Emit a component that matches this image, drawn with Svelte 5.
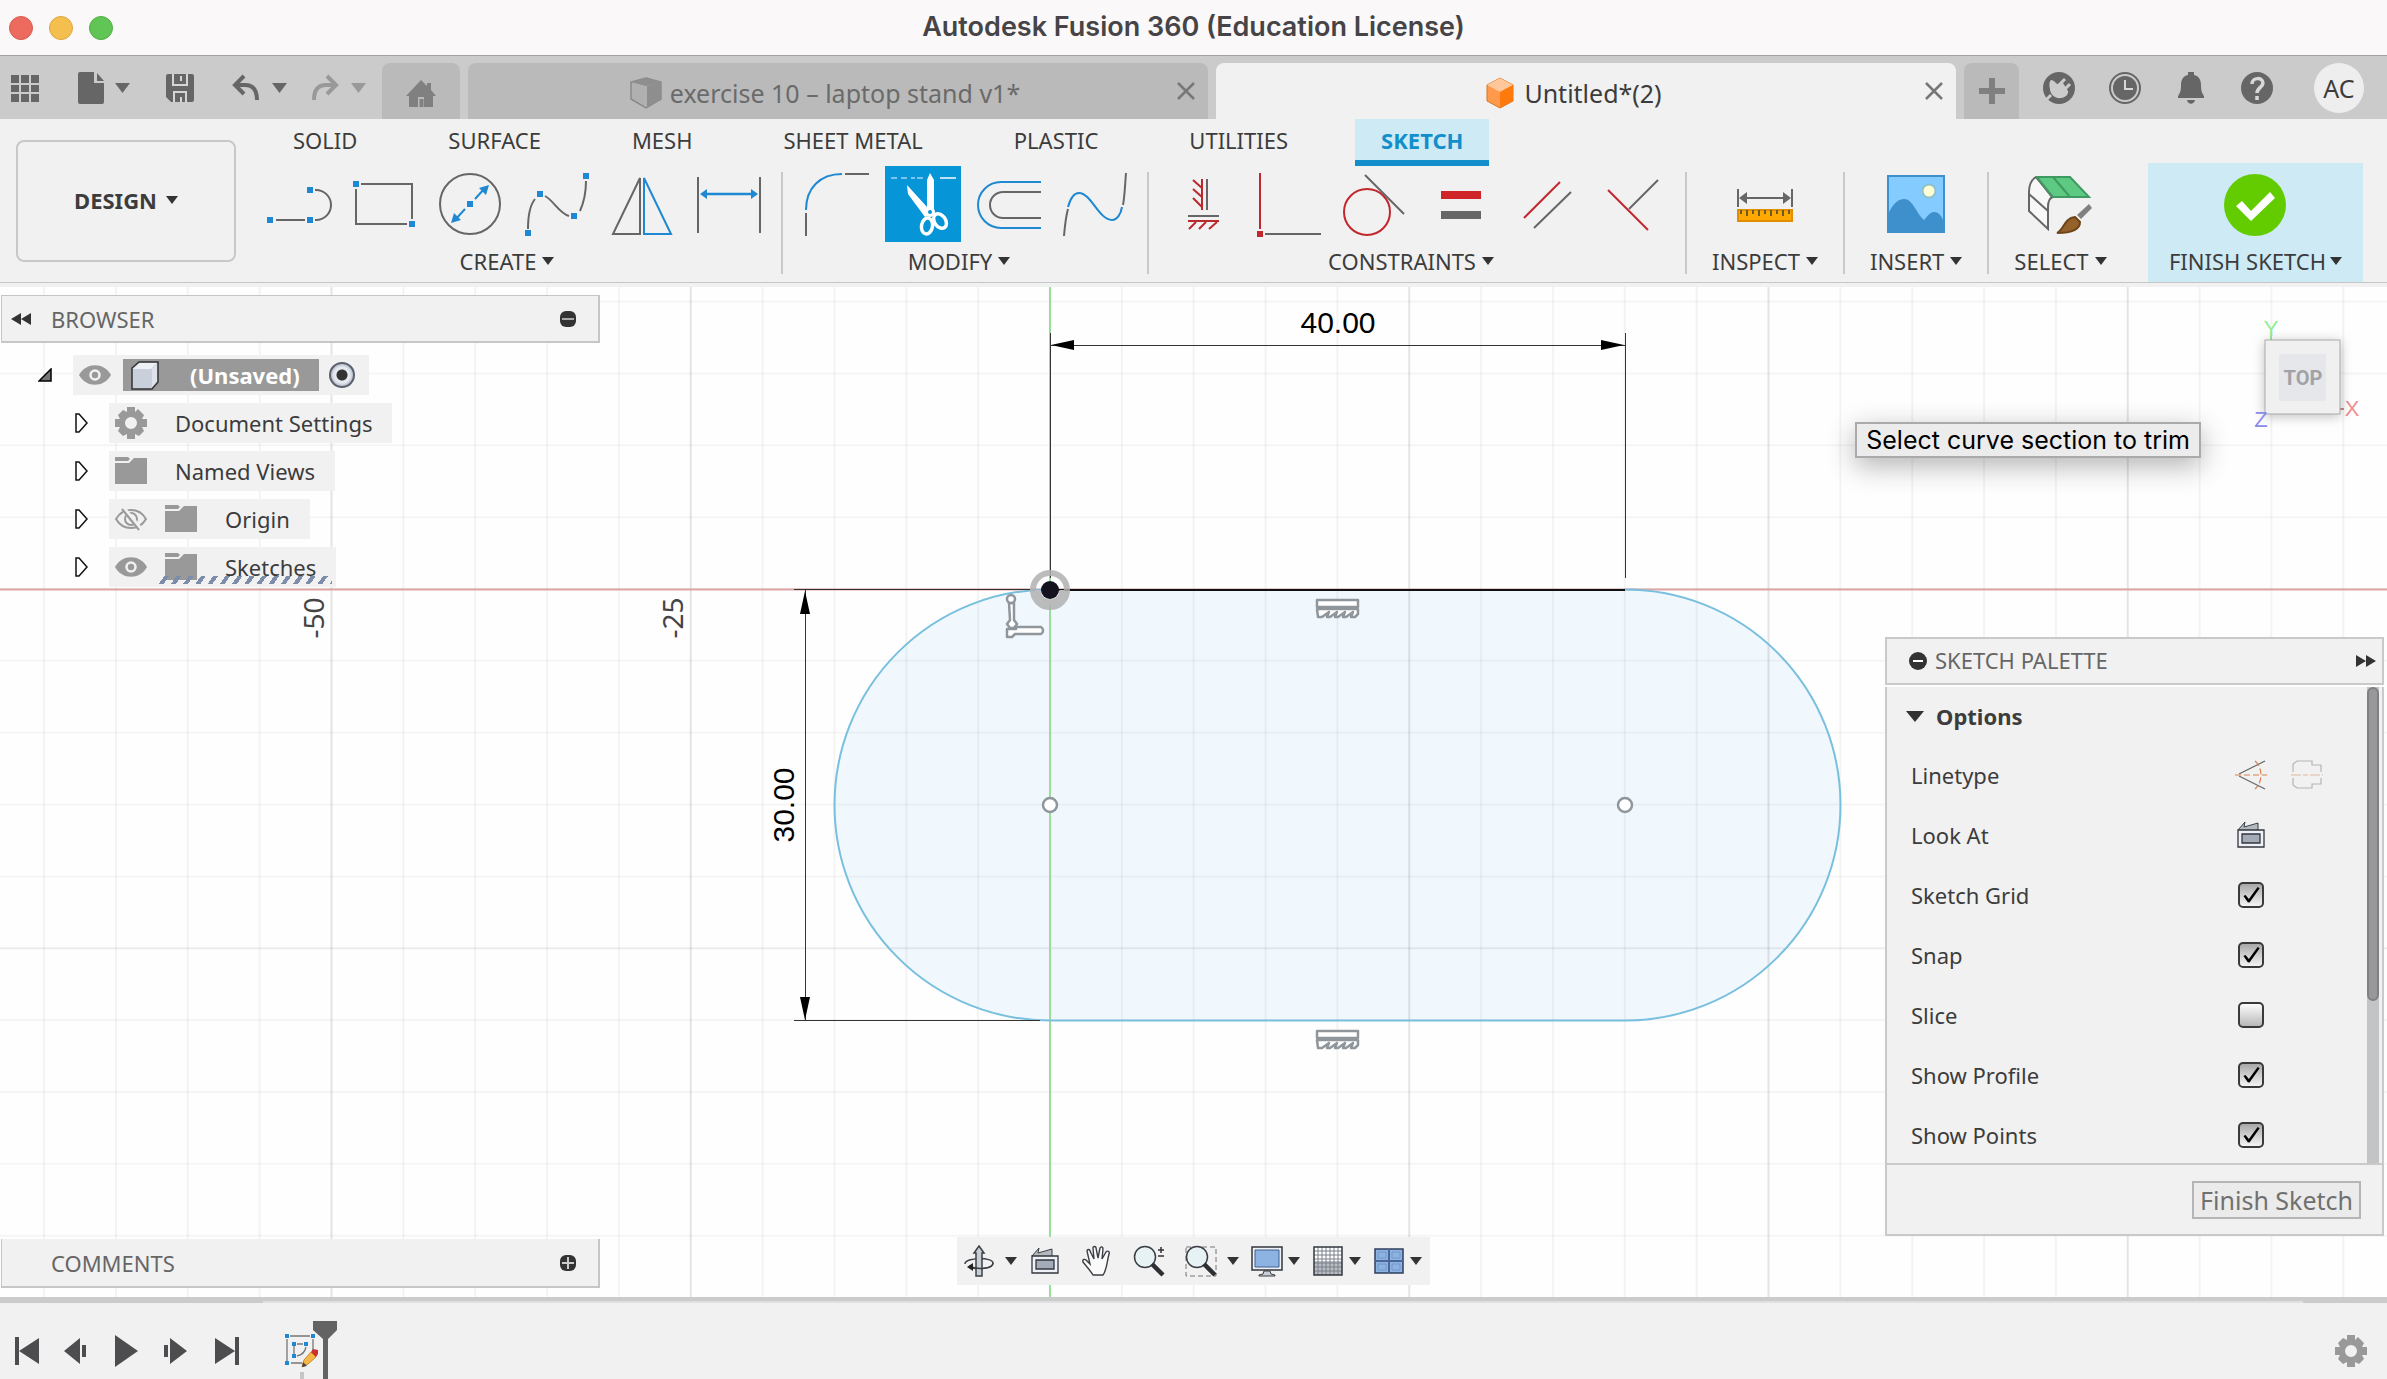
<script>
  const ribbonTabs = ['SOLID', 'SURFACE', 'MESH', 'SHEET METAL', 'PLASTIC', 'UTILITIES', 'SKETCH'];
  let activeTab = $state('SKETCH');

  const groups = [
    { label: 'CREATE', icons: ['line', 'rectangle', 'circle', 'spline', 'mirror', 'dimension'] },
    { label: 'MODIFY', icons: ['fillet', 'trim', 'offset', 'curvature'] },
    { label: 'CONSTRAINTS', icons: ['horizontal', 'coincident', 'tangent', 'equal', 'parallel', 'perpendicular'] },
    { label: 'INSPECT', icons: ['measure'], single: true },
    { label: 'INSERT', icons: ['image'], single: true },
    { label: 'SELECT', icons: ['select'], single: true },
    { label: 'FINISH SKETCH', icons: ['finish'], single: true, finish: true }
  ];

  const tree = [
    { name: 'Document Settings', icons: ['gear'] },
    { name: 'Named Views', icons: ['folder'] },
    { name: 'Origin', icons: ['hidden', 'folder'] },
    { name: 'Sketches', icons: ['eye', 'folder'], pending: true }
  ];

  let options = $state([
    { id: 'grid', name: 'Sketch Grid', on: true },
    { id: 'snap', name: 'Snap', on: true },
    { id: 'slice', name: 'Slice', on: false },
    { id: 'profile', name: 'Show Profile', on: true },
    { id: 'points', name: 'Show Points', on: true }
  ]);

  const navItems = [
    { icon: 'orbit', menu: 'wide' },
    { icon: 'lookat' },
    { icon: 'pan' },
    { icon: 'zoom' },
    { icon: 'zoomwindow', menu: 'wide' },
    { icon: 'display', menu: 'near' },
    { icon: 'gridsnap', menu: 'near' },
    { icon: 'viewports', menu: 'near' }
  ];

  // The sketch plane: 5 mm per minor grid line, 25 mm per major one.
  const origin = { x: 1050, y: 589 };
  const step = 71.85;
  const columns = Array.from({ length: 33 }, (_, i) => i - 14);
  const lines = Array.from({ length: 15 }, (_, i) => i - 4);
</script>

{#snippet caret()}
  <svg class="caret" viewBox="0 0 14 10" preserveAspectRatio="none" aria-hidden="true"><path d="M0 0h14L7 10z" fill="currentColor" /></svg>
{/snippet}

{#snippet square(x, y)}
  <rect x={x - 3} y={y - 3} width="6" height="6" fill="#1e88d2" stroke="none" />
{/snippet}

{#snippet cutter(name)}
  <svg class="tool" viewBox="0 0 64 64" fill="none" stroke="#666" stroke-width="2" aria-hidden="true">
    {#if name === 'line'}
      <path d="M9 48H38M48 18h1a15 15 0 0 1 0 30h-1" />
      {@render square(3, 48)}{@render square(43, 48)}{@render square(43, 18)}
    {:else if name === 'rectangle'}
      <path d="M8 12H59V47M54 52H3V17" />
      {@render square(3, 12)}{@render square(59, 52)}
    {:else if name === 'circle'}
      <circle cx="31" cy="32" r="30" />
      <path d="M36 27l10-11M26 37L16 48" stroke="#1e88d2" />
      <path d="M50 13l-3 10-7-7zM12 51l3-10 7 7z" fill="#1e88d2" stroke="none" />
      {@render square(31, 32)}
    {:else if name === 'spline'}
      <path d="M3 57C3 42 6 32 10 27M20 24C29 29 34 41 44 44M55 39C59 30 61 20 61 9" />
      {@render square(3, 61)}{@render square(15, 22)}{@render square(49, 44)}{@render square(61, 4)}
    {:else if name === 'mirror'}
      <path d="M2 62H29V6z" />
      <path d="M33 6V62H60z" stroke="#1e88d2" />
    {:else if name === 'dimension'}
      <path d="M1 5V61M63 5V61" />
      <path d="M6 22H58" stroke="#1e88d2" stroke-width="2.5" />
      <path d="M3 22l7-5v10zM61 22l-7-5v10z" fill="#1e88d2" stroke="none" />
    {:else if name === 'fillet'}
      <path d="M1 38C1 16 15 2 37 2" stroke="#1e88d2" />
      <path d="M40 2H64M1 41V64" />
    {:else if name === 'trim'}
      <path d="M0 6H24" stroke="#7cc4ee" stroke-dasharray="6 4" />
      <path d="M26 6H36" stroke="#7cc4ee" stroke-dasharray="6 4" /><path d="M49 6H65" stroke="#bfe2f6" />
      <path d="M39 1l4 7v32h-7V8zM16 13l20 22 3 8-5 2-17-23z" fill="#fff" stroke="none" />
      <ellipse cx="36" cy="54" rx="5.500" ry="8" stroke="#fff" stroke-width="3.500" transform="rotate(10 36 54)" />
      <ellipse cx="49" cy="49" rx="5.500" ry="8" stroke="#fff" stroke-width="3.500" transform="rotate(-35 49 49)" />
      <circle cx="39" cy="40" r="5" fill="#fff" stroke="none" /><circle cx="39" cy="40" r="2" fill="#0696d7" stroke="none" />
    {:else if name === 'offset'}
      <path d="M64 10H24a23 23 0 0 0 0 46H64" stroke="#1e88d2" />
      <path d="M64 20H26a13 13 0 0 0 0 26H64" />
    {:else if name === 'curvature'}
      <path d="M1 64C2 52 3 44 5 37M60 33C62 22 62 12 63 1" />
      <path d="M5 35C8 24 12 21 16 21C28 21 36 48 49 48C54 48 58 42 59 35" stroke="#1e88d2" />
    {:else if name === 'horizontal'}
      <path d="M36 7V38M17 44H48" />
      <path d="M31 7V38M22 8l9 8M22 17l9 8M22 26l9 9M17 49H48M25 50l-7 7M35 50l-7 7M46 50l-8 7" stroke="#b92a2e" />
    {:else if name === 'coincident'}
      <path d="M3 1V57" stroke="#c1272d" /><path d="M8 62H64" />
      <rect x="0" y="59" width="6" height="6" fill="#c1272d" stroke="none" />
    {:else if name === 'tangent'}
      <circle cx="24" cy="40" r="23" stroke="#c1272d" /><path d="M22 3L61 42" />
    {:else if name === 'equal'}
      <rect x="12" y="19" width="40" height="8" fill="#cf2529" stroke="none" />
      <rect x="12" y="39" width="40" height="8" fill="#666" stroke="none" />
    {:else if name === 'parallel'}
      <path d="M9 46L45 10" stroke="#c1272d" /><path d="M19 56L56 20" />
    {:else if name === 'perpendicular'}
      <path d="M57 8L28 37" /><path d="M7 18L47 58" stroke="#c1272d" />
    {:else if name === 'measure'}
      <path d="M5 17V35M59 17V35M10 26H54" />
      <path d="M6 26l8-6v12zM58 26l-8-6v12z" fill="#666" stroke="none" />
      <rect x="5" y="38" width="54" height="11" fill="#ffa800" stroke="#e08e00" />
      <path d="M8 38v4M14 38v6M20 38v4M26 38v6M32 38v4M38 38v6M44 38v4M50 38v6M56 38v4" stroke="#6b5a2a" />
    {:else if name === 'image'}
      <rect x="4" y="4" width="56" height="56" fill="#84cbff" stroke="none" />
      <path d="M4 42C10 30 15 27 20 27C29 27 32 41 40 48C45 42 47 40 50 40C55 40 58 44 60 51V60H4z" fill="#3e90cd" stroke="none" />
      <circle cx="45" cy="19" r="6.500" fill="#ffffd6" stroke="#8fc0c9" />
      <rect x="4" y="4" width="56" height="56" stroke="#3e90cd" />
    {:else if name === 'select'}
      <path d="M8 5C3 8 1 13 1 20V39L20 57V35C20 29 21 26 25 25" fill="#f7f7f7" />
      <path d="M1 22L20 39M8 5C14 12 18 18 24 25" />
      <path d="M9 5H42L61 25H25z" fill="#5dc983" stroke="#3f9a62" /><path d="M25 5L42 25" stroke="#3f9a62" />
      <path d="M61 32l3 4-11 11-4-4z" fill="#808080" stroke="none" />
      <path d="M47 45l5 5C52 58 42 61 29 61C36 58 36 46 47 45z" fill="#95622c" stroke="#6d4519" />
    {:else if name === 'finish'}
      <circle cx="32" cy="33" r="31" fill="#63cc00" stroke="none" />
      <path d="M19 29l9 10 19-19 5 6-24 23-15-15z" fill="#fff" stroke="none" />
    {/if}
  </svg>
{/snippet}

{#snippet glyph(name)}
  <svg class="glyph" viewBox="0 0 32 32" fill="none" aria-hidden="true">
    {#if name === 'apps'}
      <path d="M2 3h8v8H2zM12 3h8v8h-8zM22 3h8v8h-8zM2 13h8v7H2zM12 13h8v7h-8zM22 13h8v7h-8zM2 22h8v8H2zM12 22h8v8h-8zM22 22h8v8h-8z" fill="#666" />
    {:else if name === 'file'}
      <path d="M5 0H19V11H29V30a2 2 0 0 1-2 2H5a2 2 0 0 1-2-2V2a2 2 0 0 1 2-2zM22 1l7 8H22z" fill="#666" />
    {:else if name === 'save'}
      <path d="M4 2H28a2 2 0 0 1 2 2V28a2 2 0 0 1-2 2H7l-5-5V4a2 2 0 0 1 2-2z" fill="#666" />
      <path d="M9 2v11H23V2M10 30V20H22V30M17 25v5M17 4v5" stroke="#d5d5d5" stroke-width="2" />
    {:else if name === 'undo'}
      <path d="M14 4L5 13l9 9M6 13H15C23 13 27 18 27 28" stroke="#666" stroke-width="4" />
    {:else if name === 'redo'}
      <path d="M18 4L27 13L18 22M26 13H17C9 13 5 18 5 28" stroke="#999" stroke-width="4" />
    {:else if name === 'home'}
      <path d="M16 2l6 6V5h4v7l5 6H28V29H19V19H13V29H4V18H1z" fill="#808080" /><path d="M14.500 21h4v8h-4z" fill="#808080" />
    {:else if name === 'part'}
      <path d="M16 1L31 5V22L16 31L1 22V5z" fill="#b0b0b0" stroke="#8a8a8a" stroke-width="1.500" />
      <path d="M17 9L31 5V22L17 31zM1 5L16 1 31 5 16 9z" fill="#8e8e8e" />
    {:else if name === 'assembly'}
      <path d="M16 1L29 8V24L16 31L3 24V8z" fill="#ff9a4d" stroke="#d9741f" />
      <path d="M16 1L29 8L16 15L3 8z" fill="#ffc89b" /><path d="M16 15L29 8V24L16 31z" fill="#ff7a0d" />
    {:else if name === 'plug'}
      <circle cx="16" cy="16" r="16" fill="#666" />
      <path d="M8 8C10 8 12 10 14 12L20 11L25 19C26 22 22 26 18 26C12 27 7 22 7 17C6 13 6 10 8 8z" fill="#ccc" />
      <path d="M16 13l6-6M21 18l6-6M8 23l-6 6" stroke="#ccc" stroke-width="3" />
    {:else if name === 'clock'}
      <circle cx="16" cy="16" r="15" stroke="#666" stroke-width="2" /><circle cx="16" cy="16" r="12" fill="#666" />
      <path d="M16 8v9h8" stroke="#d8d8d8" stroke-width="2" />
    {:else if name === 'bell'}
      <path d="M13 0h6v3c5 1 7 5 7 10 0 6 1 8 3 11v2H3v-2c2-3 3-5 3-11 0-5 2-9 7-10zM12 28h8c-1 5-7 5-8 0z" fill="#666" />
    {:else if name === 'help'}
      <circle cx="16" cy="16" r="16" fill="#666" />
      <path d="M11 12C11 5 22 5 22 11C22 15 16 16 16 21M16 24v4" stroke="#d8d8d8" stroke-width="3.500" />
    {:else if name === 'gear'}
      <path d="M12 0h8v5l3-3 6 6-2 4h5v8h-5l2 4-5 5-4-2v5h-8v-5l-4 2-5-5 2-4H0v-8h5L3 8l5-5 4 2zM16 10a6 6 0 1 0 0 12a6 6 0 0 0 0-12z" fill="#999" fill-rule="evenodd" />
    {:else if name === 'folder'}
      <path d="M0 8H14l5-5H32V29H0zM0 2H13l2 2-2 2H0z" fill="#999" />
    {:else if name === 'eye'}
      <path d="M0 16C7 3 25 3 32 16C25 29 7 29 0 16z" fill="#999" />
      <circle cx="16" cy="16" r="4.500" stroke="#f1f1f1" stroke-width="2.500" />
    {:else if name === 'hidden'}
      <path d="M1 16C8 4 24 4 31 16C24 28 8 28 1 16z" stroke="#999" stroke-width="2" />
      <circle cx="16" cy="16" r="6" stroke="#999" stroke-width="2" /><circle cx="16" cy="16" r="2" fill="#999" />
      <path d="M8 5l18 22" stroke="#f1f1f1" stroke-width="5" /><path d="M7 6l17 21" stroke="#999" stroke-width="2" />
    {:else if name === 'body'}
      <path d="M3 9L10 3H29V23L23 30H3z" fill="#c9cfdb" stroke="#333" stroke-width="1.500" />
      <path d="M4 10L11 4H28L22 10z" fill="#eef1f6" /><path d="M23 10L28 5V22L23 28z" fill="#dde2ec" />
    {:else if name === 'orbit'}
      <path d="M2 19C2 12 30 12 30 18C30 24 14 25 6 22" stroke="#3b3f45" stroke-width="1.500" />
      <path d="M16 1l5 7h-2V31h-6V8h-2z" fill="#c9cdd4" stroke="#3b3f45" stroke-width="1.500" />
      <path d="M6 21C14 25 30 24 30 18" stroke="#3b3f45" stroke-width="1.500" />
      <path d="M4 22l6-4v8z" fill="#222" />
    {:else if name === 'lookat'}
      <path d="M3 11L10 3L9 8L23 4V11" fill="#b3b8bf" stroke="#3b3f45" />
      <path d="M3 11H29V28H3z" fill="#eef1f8" stroke="#33373d" stroke-width="1.300" />
      <path d="M7 15H25V24H7z" fill="#a3abb8" stroke="#33373d" stroke-width="1.300" />
    {:else if name === 'pan'}
      <path d="M12 30C9 25 5 21 2 17C1 14 4 14 5 15L9 19L6 6C6 4 9 4 9 6L13 14L12 3C12 1 15 1 15 3L17 13L19 3C20 1 22 2 22 4L21 14L25 7C27 5 29 7 28 9C26 16 26 25 22 30z" fill="#fafafa" stroke="#3b3f45" stroke-width="1.400" />
    {:else if name === 'zoom'}
      <circle cx="12" cy="12" r="10.500" fill="#e6f2f4" stroke="#3b3f45" stroke-width="1.500" />
      <path d="M19 19L30 30" stroke="#2d2f33" stroke-width="4.500" /><path d="M25 5h6M28 2v6M25 11h6" stroke="#333" stroke-width="1.500" />
    {:else if name === 'zoomwindow'}
      <path d="M1 2H31V31H1z" stroke="#777" stroke-dasharray="5 3" />
      <circle cx="12" cy="12" r="10.500" fill="#e6f2f4" stroke="#3b3f45" stroke-width="1.500" /><path d="M19 19L30 30" stroke="#2d2f33" stroke-width="4.500" />
    {:else if name === 'display'}
      <path d="M1 2H31V25H1z" fill="#eef1f6" stroke="#33373d" stroke-width="1.500" /><path d="M4 5H28V22H4z" fill="#8db3e2" stroke="#3f5f8f" />
      <path d="M13 26h6l1 3 4 1v1H8v-1l4-1z" fill="#c9cdd4" stroke="#3b3f45" />
    {:else if name === 'gridsnap'}
      <path d="M2 2H30V30H2z" fill="#fff" /><path d="M2 16H30V30H2z" fill="#b9bdc5" />
      <path d="M6 2V30M10 2V30M14 2V30M18 2V30M22 2V30M26 2V30M2 6H30M2 10H30M2 14H30M2 18H30M2 22H30M2 26H30" stroke="#7b8088" />
      <path d="M2 2H30V30H2z" stroke="#33373d" stroke-width="1.500" />
    {:else if name === 'viewports'}
      <path d="M2 4H30V28H2z" fill="#8db3e2" stroke="#2c3e5e" stroke-width="1.500" />
      <path d="M16 4V28M2 16H30" stroke="#4a6796" stroke-width="2" /><path d="M5 7h8v6H5zM19 7h8v6h-8zM5 19h8v6H5zM19 19h8v6h-8z" stroke="#7398cb" />
    {:else if name === 'construction'}
      <path d="M30 2L4 15M4 17L30 30" stroke="#666" stroke-width="1.200" />
      <path d="M0 16H32M20 2C28 9 28 23 20 30" stroke="#d98250" stroke-width="1.200" stroke-dasharray="6 3" />
    {:else if name === 'centerline'}
      <path d="M2 13V5l4-3H21V6h9v7M2 19v7l4 3H21v-4h9v-6" stroke="#b5b5b5" stroke-width="1.200" />
      <path d="M0 16H32" stroke="#e0b79f" stroke-width="1.200" stroke-dasharray="10 2 5 2" />
    {:else if name === 'start'}
      <path d="M4 2h4v28H4zM28 3V29L8 16z" fill="#4d4d4f" />
    {:else if name === 'back'}
      <path d="M19 3V29L3 16zM21 10h4v12h-4z" fill="#4d4d4f" />
    {:else if name === 'play'}
      <path d="M4 0L27 16L4 32z" fill="#4d4d4f" />
    {:else if name === 'forward'}
      <path d="M9 3V29L26 16zM3 10h4v12H3z" fill="#4d4d4f" />
    {:else if name === 'end'}
      <path d="M24 2h4v28h-4zM4 3V29L24 16z" fill="#4d4d4f" />
    {/if}
  </svg>
{/snippet}

{#snippet flatMark(x, y)}
  <g transform="translate({x} {y})" fill="#fff" stroke="#8f969c" stroke-width="2.500">
    <path d="M2 1H43V8H2zM2 10H43V15L40 18H36L38 13L31 18H28L30 13L23 18H20L22 13L15 18H12L14 13L7 18H3z" stroke-linejoin="round" />
  </g>
{/snippet}

<div class="app">
  <header class="titlebar">
    <div class="lights">
      <button class="light close" aria-label="Close"></button>
      <button class="light minimise" aria-label="Minimise"></button>
      <button class="light full" aria-label="Full screen"></button>
    </div>
    <h1>Autodesk Fusion 360 (Education License)</h1>
  </header>

  <div class="strip">
    <div class="quick">
      <button aria-label="Data panel">{@render glyph('apps')}</button>
      <button class="menu" aria-label="File">{@render glyph('file')}{@render caret()}</button>
      <button aria-label="Save">{@render glyph('save')}</button>
      <div class="history">
        <button class="menu" aria-label="Undo">{@render glyph('undo')}{@render caret()}</button>
        <button class="menu faint" aria-label="Redo">{@render glyph('redo')}{@render caret()}</button>
      </div>
    </div>
    <nav class="documents">
      <button class="doc home" aria-label="Home">{@render glyph('home')}</button>
      <div class="doc">
        <button class="doc-name">{@render glyph('part')}exercise 10 – laptop stand v1*</button>
        <button class="doc-close" aria-label="Close exercise 10"><svg viewBox="0 0 18 18"><path d="M1 1L17 17M17 1L1 17" stroke="#777" stroke-width="2.500" /></svg></button>
      </div>
      <div class="doc current">
        <button class="doc-name">{@render glyph('assembly')}Untitled*(2)</button>
        <button class="doc-close" aria-label="Close Untitled"><svg viewBox="0 0 18 18"><path d="M1 1L17 17M17 1L1 17" stroke="#777" stroke-width="2.500" /></svg></button>
      </div>
      <button class="doc add" aria-label="New design"><svg viewBox="0 0 26 26"><path d="M13 0V26M0 13H26" stroke="#808080" stroke-width="6" /></svg></button>
    </nav>
    <div class="account">
      <button aria-label="Extensions">{@render glyph('plug')}</button>
      <button aria-label="Job status">{@render glyph('clock')}</button>
      <button aria-label="Notifications">{@render glyph('bell')}</button>
      <button aria-label="Help">{@render glyph('help')}</button>
      <button class="avatar">AC</button>
    </div>
  </div>

  <div class="ribbon">
    <button class="workspace">DESIGN {@render caret()}</button>
    <div class="ribbon-main">
      <nav class="tabs">
        {#each ribbonTabs as tab}
          <button class="tab" class:active={tab === activeTab} onclick={() => (activeTab = tab)}>{tab}</button>
        {/each}
      </nav>
      <div class="groups">
        {#each groups as group}
          <div class="group" class:single={group.single} class:finish={group.finish}>
            <div class="tools">
              {#each group.icons as icon}
                <button class="tool-button" class:pressed={icon === 'trim'} aria-label={icon}>{@render cutter(icon)}</button>
              {/each}
            </div>
            <button class="group-label">{group.label}{@render caret()}</button>
          </div>
        {/each}
      </div>
    </div>
  </div>

  <main class="workspace-area">
    <svg class="plane" viewBox="0 287 2387 1010" preserveAspectRatio="xMidYMid slice" aria-label="Sketch plane">
      <rect x="0" y="287" width="2387" height="1010" fill="#fefefe" />
      <path d="M1050 589.500H1625A215.500 215.500 0 0 1 1625 1020.500H1050A215.500 215.500 0 0 1 1050 589.500z" fill="#f0f8fe" />
      {#each columns as c}
        <line x1={origin.x + c * step} x2={origin.x + c * step} y1="287" y2="1297" stroke="#000" stroke-opacity={c % 5 === 0 ? 0.1 : 0.045} stroke-width="2" />
      {/each}
      {#each lines as l}
        <line x1="0" x2="2387" y1={origin.y + l * step} y2={origin.y + l * step} stroke="#000" stroke-opacity={l % 5 === 0 ? 0.07 : 0.035} stroke-width="2" />
      {/each}
      <line x1="0" x2="2387" y1="589.500" y2="589.500" stroke="#dda5a5" stroke-width="2" />
      <line x1="1050" x2="1050" y1="287" y2="1297" stroke="#99df99" stroke-width="2" />
      <path d="M1625 589.500A215.500 215.500 0 0 1 1625 1020.500H1050A215.500 215.500 0 0 1 1050 589.500" fill="none" stroke="#79bfde" stroke-width="2" />
      <g stroke="#333" stroke-width="1">
        <path d="M1050.500 333V578M1625.500 333V578M1050 345.500H1625M794 589.500H1030M794 1020.500H1040M805.500 590V1021" />
        <path d="M1050 590H1625" stroke="#111" stroke-width="2" />
      </g>
      <path d="M1051 345l23-5v10zM1624 345l-23-5v10zM805 591l-5 23h10zM805 1020l-5-23h10z" />
      <text class="measure" x="1338" y="333">40.00</text>
      <text class="measure" x="0" y="0" transform="translate(794 805) rotate(-90)">30.00</text>
      <text class="tick" x="0" y="0" transform="translate(324 618) rotate(-90)">-50</text>
      <text class="tick" x="0" y="0" transform="translate(683 618) rotate(-90)">-25</text>
      <circle cx="1050" cy="590" r="17" fill="none" stroke="#b0b0b0" stroke-opacity="0.85" stroke-width="6" />
      <path d="M1062 590A12 12 0 0 1 1038 590" fill="none" stroke="#bbb" stroke-width="5" />
      <circle cx="1050" cy="590" r="9" fill="#14121e" />
      <circle cx="1050" cy="805" r="7" fill="#fff" stroke="#8f969c" stroke-width="2.500" />
      <circle cx="1625" cy="805" r="7" fill="#fff" stroke="#8f969c" stroke-width="2.500" />
      {@render flatMark(1315, 599)}
      {@render flatMark(1315, 1030)}
      <g fill="#fff" stroke="#8f969c" stroke-width="2.500" stroke-linejoin="round">
        <path d="M1009 603H1014V620L1017 624L1014 628H1010L1007 624L1010 620z" />
        <circle cx="1011" cy="599" r="4" />
        <path d="M1007 629H1016V627H1041a4 4 0 0 1 0 7H1015V634L1012 637H1007z" />
      </g>
      <g class="axis">
        <path d="M2271 336V340" stroke="#9be89b" stroke-width="2" />
        <text x="2271" y="336" fill="#90ee90">Y</text>
        <text x="2352" y="416" fill="#f09090">X</text>
        <path d="M2339 409h5" stroke="#c98a8a" stroke-width="2" />
        <rect class="cube" x="2265" y="340" width="75" height="74" fill="#f0f0f0" stroke="#aaa" />
        <rect x="2279" y="354" width="47" height="47" fill="#e6e7eb" />
        <text class="face" x="2303" y="385">TOP</text>
        <text x="2261" y="427" fill="#8a8aea">Z</text>
      </g>
    </svg>

    <section class="browser">
      <header class="panel-head">
        <button class="collapse" aria-label="Collapse browser"><svg viewBox="0 0 20 12"><path d="M10 0V12L0 6zM20 0V12L10 6z" fill="#333" /></svg></button>
        <h2>BROWSER</h2>
        <button class="badge" aria-label="Hide"><svg viewBox="0 0 16 16"><rect width="16" height="16" rx="6" fill="#333" /><path d="M2 8h12" stroke="#aaa" stroke-width="2" /></svg></button>
      </header>
      <ul class="tree">
        <li class="root">
          <svg class="twist" viewBox="0 0 14 14"><path d="M13 1V13H1z" fill="#777" stroke="#000" stroke-width="1.500" /></svg>
          <span class="node">
            {@render glyph('eye')}
            <span class="selected">{@render glyph('body')}<span>(Unsaved)</span></span>
            <input type="radio" checked aria-label="Activate component" />
          </span>
        </li>
        {#each tree as item}
          <li>
            <svg class="twist" viewBox="0 0 14 20"><path d="M2 1H5L13 10L5 19H2z" fill="#fff" stroke="#111" stroke-width="1.500" /></svg>
            <span class="node" class:pending={item.pending}>
              {#each item.icons as icon}{@render glyph(icon)}{/each}
              <span class="name">{item.name}</span>
            </span>
          </li>
        {/each}
      </ul>
    </section>

    <p class="hint">Select curve section to trim</p>

    <section class="comments panel-head">
      <h2>COMMENTS</h2>
      <button class="badge" aria-label="Add comment"><svg viewBox="0 0 16 16"><rect width="16" height="16" rx="6" fill="#333" /><path d="M2 8h12M8 2v12" stroke="#ccc" stroke-width="2" /></svg></button>
    </section>

    <div class="nav-dock">
      <div class="nav-bar">
        {#each navItems as item}
          <button class={['nav-item', item.menu ?? 'plain']} aria-label={item.icon}>
            {@render glyph(item.icon)}{#if item.menu}{@render caret()}{/if}
          </button>
        {/each}
      </div>
    </div>

    <section class="palette">
      <header class="palette-head">
        <button class="badge" aria-label="Minimise palette"><svg viewBox="0 0 18 18"><circle cx="9" cy="9" r="9" fill="#333" /><path d="M4 9h10" stroke="#fff" stroke-width="2" /></svg></button>
        <h2>SKETCH PALETTE</h2>
        <button class="collapse" aria-label="Collapse palette"><svg viewBox="0 0 20 12"><path d="M0 0V12L10 6zM10 0V12L20 6z" fill="#333" /></svg></button>
      </header>
      <div class="palette-body">
        <div class="options">
          <button class="options-title">{@render caret()}Options</button>
          <div class="option"><span>Linetype</span>
            <span class="controls"><button aria-label="Construction">{@render glyph('construction')}</button><button aria-label="Centerline">{@render glyph('centerline')}</button></span>
          </div>
          <div class="option"><span>Look At</span>
            <span class="controls"><button aria-label="Look at">{@render glyph('lookat')}</button></span>
          </div>
          {#each options as option}
            <div class="option">
              <label for={option.id}>{option.name}</label>
              <span class="controls"><input type="checkbox" id={option.id} bind:checked={option.on} /></span>
            </div>
          {/each}
        </div>
        <div class="scroll-track"><div class="scroll-thumb"></div></div>
      </div>
      <footer class="palette-foot"><button class="finish-button">Finish Sketch</button></footer>
    </section>
  </main>

  <footer class="timeline">
    <div class="splitter"><div class="groove"></div></div>
    <div class="timeline-bar">
      <div class="playback">
        {#each ['start', 'back', 'play', 'forward', 'end'] as action}
          <button aria-label={action}>{@render glyph(action)}</button>
        {/each}
      </div>
      <svg class="feature" viewBox="0 0 60 60" fill="none" aria-label="Sketch1">
        <path d="M8 17H28M5 20V42M9 44H20M31 20V32" stroke="#777" stroke-width="1.300" />
        <path d="M12 27V35M15 25H21M24 28C23 33 20 36 15 37" stroke="#777" stroke-width="1.300" />
        <path d="M3 15h4v4H3zM29 15h4v4h-4zM3 42h4v4H3zM10 23h4v4h-4zM22 23h4v4h-4zM10 35h4v4h-4z" fill="#1e88d2" />
        <path d="M20 48l2-7 7-8 5 5-8 7z" fill="#f6b648" stroke="#c98a2a" /><path d="M20 48l1-5 4 4z" fill="#444" />
        <path d="M29 33l2-3 5 1v4l-2 3z" fill="#cf3030" />
        <path d="M18 53h4v7h-4z" fill="#c6c6c6" />
        <path d="M31 2H55V11L46 20V60H41V20L31 11z" fill="#636363" />
      </svg>
      <button class="settings" aria-label="Timeline settings">{@render glyph('gear')}</button>
    </div>
  </footer>
</div>

<style>
  :global(body) { margin: 0; }
  .app {
    display: flex; flex-direction: column; height: 100vh; min-height: 900px; overflow: hidden;
    font-family: "Noto Sans", "Open Sans", sans-serif; font-size: 22px; line-height: 28px; color: #3c3c3c; background: #f1f1f1;
  }
  button { display: flex; align-items: center; justify-content: center; margin: 0; padding: 0; border: 0; background: none; font: inherit; color: inherit; white-space: nowrap; }
  h1, h2, p, ul { margin: 0; padding: 0; font: inherit; }
  svg { display: block; flex: none; }
  .caret { width: 12px; height: 8px; color: #333; }
  .glyph { width: 32px; height: 32px; }
  .tool { width: 64px; height: 64px; overflow: visible; }

  .titlebar { display: grid; grid-template-columns: 1fr auto 1fr; align-items: center; height: 55px; flex: none; background: #faf8f8; border-bottom: 1px solid #a3a3a3; }
  .titlebar h1 { padding-bottom: 2px; font-family: Inter, sans-serif; font-weight: 600; font-size: 27px; color: #464446; }
  .lights { display: flex; gap: 16px; padding-left: 9px; }
  .light { width: 24px; height: 24px; border-radius: 50%; }
  .light.close { background: #ed6a5f; border: 1px solid #d95a50; }
  .light.minimise { background: #f5bf50; border: 1px solid #dfa63e; }
  .light.full { background: #61c555; border: 1px solid #51ad44; }

  .strip { display: flex; align-items: stretch; height: 63px; flex: none; background: #cbcbcb; }
  .quick { display: flex; align-items: center; gap: 34px; padding: 0 16px 0 9px; }
  .history { display: flex; gap: 22px; }
  .menu { gap: 8px; }
  .history .menu { gap: 10px; }
  .menu .caret { width: 15px; height: 10px; color: #666; }
  .menu.faint .caret { color: #999; }
  .documents { display: flex; flex: 1; align-items: flex-end; gap: 8px; }
  .doc { display: flex; align-items: center; flex: 1; height: 56px; box-sizing: border-box; border-radius: 8px 8px 0 0; background: #bababa; color: #6a6a6a; font-size: 25px; }
  .doc.home { flex: none; width: 78px; padding-top: 6px; }
  .doc.add { flex: none; width: 55px; }
  .doc.add svg { width: 26px; height: 26px; }
  .doc.current { background: #f1f1f1; color: #3c3c3c; }
  .doc-name { flex: 1; gap: 8px; padding: 3px 0 0 8px; }
  .doc-close { width: 24px; margin-right: 10px; }
  .doc-close svg { width: 18px; height: 18px; }
  .account { display: flex; align-items: center; gap: 34px; padding: 0 23px 0 24px; }
  .avatar { width: 50px; height: 50px; margin-left: 7px; border-radius: 50%; background: #eee; font-size: 25px; }

  .ribbon { display: flex; height: 163px; flex: none; border-bottom: 1px solid #c6c6c6; }
  .workspace { width: 220px; height: 122px; box-sizing: border-box; margin: 21px 9px 0 16px; padding-bottom: 2px; border: 2px solid #c8c8c8; border-radius: 8px; font-weight: 700; gap: 9px; flex: none; }
  .ribbon-main { display: flex; flex-direction: column; flex: 1; }
  .tabs { display: flex; flex: none; gap: 43px; height: 47px; padding-left: 24px; }
  .tab { padding: 0 24px; border-bottom: 6px solid transparent; }
  .tab.active { padding: 0 26px; background: #cdeaf5; border-color: #128fcb; color: #128fcb; font-weight: 700; }
  .groups { display: flex; flex: 1; min-height: 0; padding-right: 24px; }
  .group { display: flex; flex-direction: column; align-items: center; height: 102px; padding: 0 20px 0 22px; margin-top: 6px; border-right: 2px solid #c9c9c9; }
  .tools { display: flex; gap: 22px; }
  .tool-button.pressed { background: #0696d7; box-shadow: 0 0 0 6px #0696d7; }
  .group-label { gap: 6px; margin-top: 11px; padding-right: 14px; }
  .group.single { padding: 0 25px; }
  .single .group-label { padding-right: 0; }
  .group:nth-last-child(2) { border-right: 0; }
  .group.finish { height: auto; padding: 9px 21px 0; margin: -3px 0 0 auto; border-right: 0; background: #cdeaf5; }
  .finish .group-label { gap: 4px; }

  .workspace-area { position: relative; flex: 1; min-height: 0; margin-top: 4px; background: #fefefe; }
  .plane { position: absolute; inset: 0; width: 100%; height: 100%; }
  .measure { font-family: "Liberation Sans", Arial, sans-serif; font-size: 30px; text-anchor: middle; fill: #000; }
  .tick { font-size: 28px; text-anchor: middle; fill: #444; }
  .axis text { font-family: "Liberation Sans", Arial, sans-serif; font-size: 22px; text-anchor: middle; }
  .axis .face { font-weight: 700; font-size: 20px; fill: #a0a2a6; font-family: Roboto, sans-serif; }
  .cube { filter: drop-shadow(0 2px 6px rgb(0 0 0 / 25%)); }

  .panel-head { display: flex; align-items: center; height: 48px; box-sizing: border-box; background: #f1f1f1; border: 1px solid #c6c6c6; border-width: 1px 2px 2px 1px; color: #666; }
  .panel-head h2 { flex: 1; padding-left: 20px; }
  .panel-head .collapse { margin-left: 9px; }
  .collapse svg { width: 20px; height: 12px; }
  .panel-head .badge { margin-right: 22px; }
  .panel-head .badge svg { width: 16px; height: 16px; }
  .browser { position: absolute; top: 8px; left: 1px; width: 599px; }
  .tree { display: flex; flex-direction: column; gap: 8px; margin-top: 12px; list-style: none; }
  .tree li { display: flex; align-items: center; gap: 21px; height: 40px; padding-left: 73px; }
  .tree li.root { gap: 21px; padding-left: 37px; }
  .twist { width: 14px; height: 20px; }
  .node { display: flex; align-items: center; height: 40px; box-sizing: border-box; padding: 0 20px 0 6px; gap: 18px; background: #f1f1f1; }
  .root .node { padding-right: 14px; gap: 12px; }
  .root .twist { height: 14px; }
  .node .name { padding-left: 10px; }
  .selected { display: flex; align-items: center; gap: 29px; height: 32px; padding: 0 19px 0 6px; background: #999; color: #fff; font-weight: 700; }
  .node input { appearance: none; width: 26px; height: 26px; margin: 0 0 0 -2px; border: 2px solid #5a606c; border-radius: 50%; background: radial-gradient(circle, #333 0 5px, #e4e8f0 6px 8px, #b9bfca 11px); }
  .pending { position: relative; }
  .pending::after { content: ""; position: absolute; left: 48px; right: 4px; bottom: 3px; height: 8px; background: repeating-linear-gradient(125deg, transparent 0 6px, #7d8ca8 6px 10px); }

  .hint { position: absolute; top: 135px; right: 186px; padding: 3px 9px; border: 2px solid #aaa; background: #ececec; box-shadow: 0 8px 28px rgb(0 0 0 / 30%); font-family: Inter, sans-serif; font-size: 25px; line-height: 26px; color: #000; white-space: nowrap; }
  .comments { position: absolute; left: 1px; bottom: 9px; width: 599px; height: 49px; border-top: 0; }
  .comments h2 { padding-left: 49px; }

  .nav-dock { position: absolute; left: 0; right: 0; bottom: 12px; display: flex; justify-content: center; }
  .nav-bar { display: flex; align-items: center; gap: 12px; height: 48px; padding: 0 8px 0 6px; background: #f1f1f1; }
  .nav-item.wide { gap: 10px; }
  .nav-item.near { gap: 5px; }
  .nav-item.plain { margin-right: 8px; }

  .palette { position: absolute; right: 3px; bottom: 61px; width: 499px; background: #fefefe; }
  .palette-head { display: flex; align-items: center; gap: 8px; height: 48px; margin-bottom: 2px; padding: 0 6px 0 22px; box-sizing: border-box; border: 2px solid #c9c9c9; background: #f1f1f1; color: #666; }
  .palette-head h2 { flex: 1; padding-bottom: 2px; }
  .palette-head .badge svg { width: 18px; height: 18px; }
  .palette-body { display: flex; height: 478px; overflow: hidden; border: 2px solid #c9c9c9; border-top: 0; padding-right: 3px; box-sizing: border-box; background: #f1f1f1; }
  .options { flex: 1; }
  .options-title { gap: 12px; height: 58px; padding-left: 19px; font-weight: 700; }
  .options-title .caret { width: 18px; height: 11px; }
  .option { display: grid; grid-template-columns: 1fr 132px; align-items: center; height: 60px; padding-left: 24px; }
  .controls { display: flex; align-items: center; gap: 24px; }
  .option input { appearance: none; display: grid; place-items: center; width: 26px; height: 26px; margin: 0 0 0 3px; border: 2px solid #3a3a3a; border-radius: 5px; background: linear-gradient(#fdfdfd, #b8b8b8); }
  .option input:checked { background: linear-gradient(#a8a8a8, #f4f4f4); }
  .option input:checked::after { content: ""; width: 18px; height: 18px; background: #000; clip-path: polygon(8% 55%, 20% 50%, 38% 72%, 87% 5%, 98% 12%, 42% 92%, 32% 90%); }
  .scroll-track { width: 12px; background: #c3c4c6; }
  .scroll-thumb { height: 66%; border: 2px solid #808082; border-radius: 7px; background: #98989a; box-sizing: border-box; }
  .palette-foot { display: flex; align-items: center; justify-content: flex-end; height: 71px; padding-right: 21px; border: 2px solid #c9c9c9; border-top: 0; box-sizing: border-box; background: #f1f1f1; }
  .finish-button { height: 38px; padding: 0 6px; border: 2px solid #b5b5b5; background: #ebebeb; font-size: 25px; color: #707070; }

  .timeline { flex: none; height: 82px; display: flex; flex-direction: column; }
  .splitter { height: 6px; padding-top: 4px; box-sizing: border-box; background: #cbcbcb; }
  .groove { height: 2px; margin: 0 84px 0 263px; background: #e0e0e0; }
  .timeline-bar { display: flex; flex: 1; align-items: flex-end; padding-right: 20px; }
  .playback { display: flex; gap: 18px; padding: 0 39px 12px 11px; }
  .feature { width: 60px; height: 60px; }
  .settings { margin: 0 0 12px auto; }
</style>
